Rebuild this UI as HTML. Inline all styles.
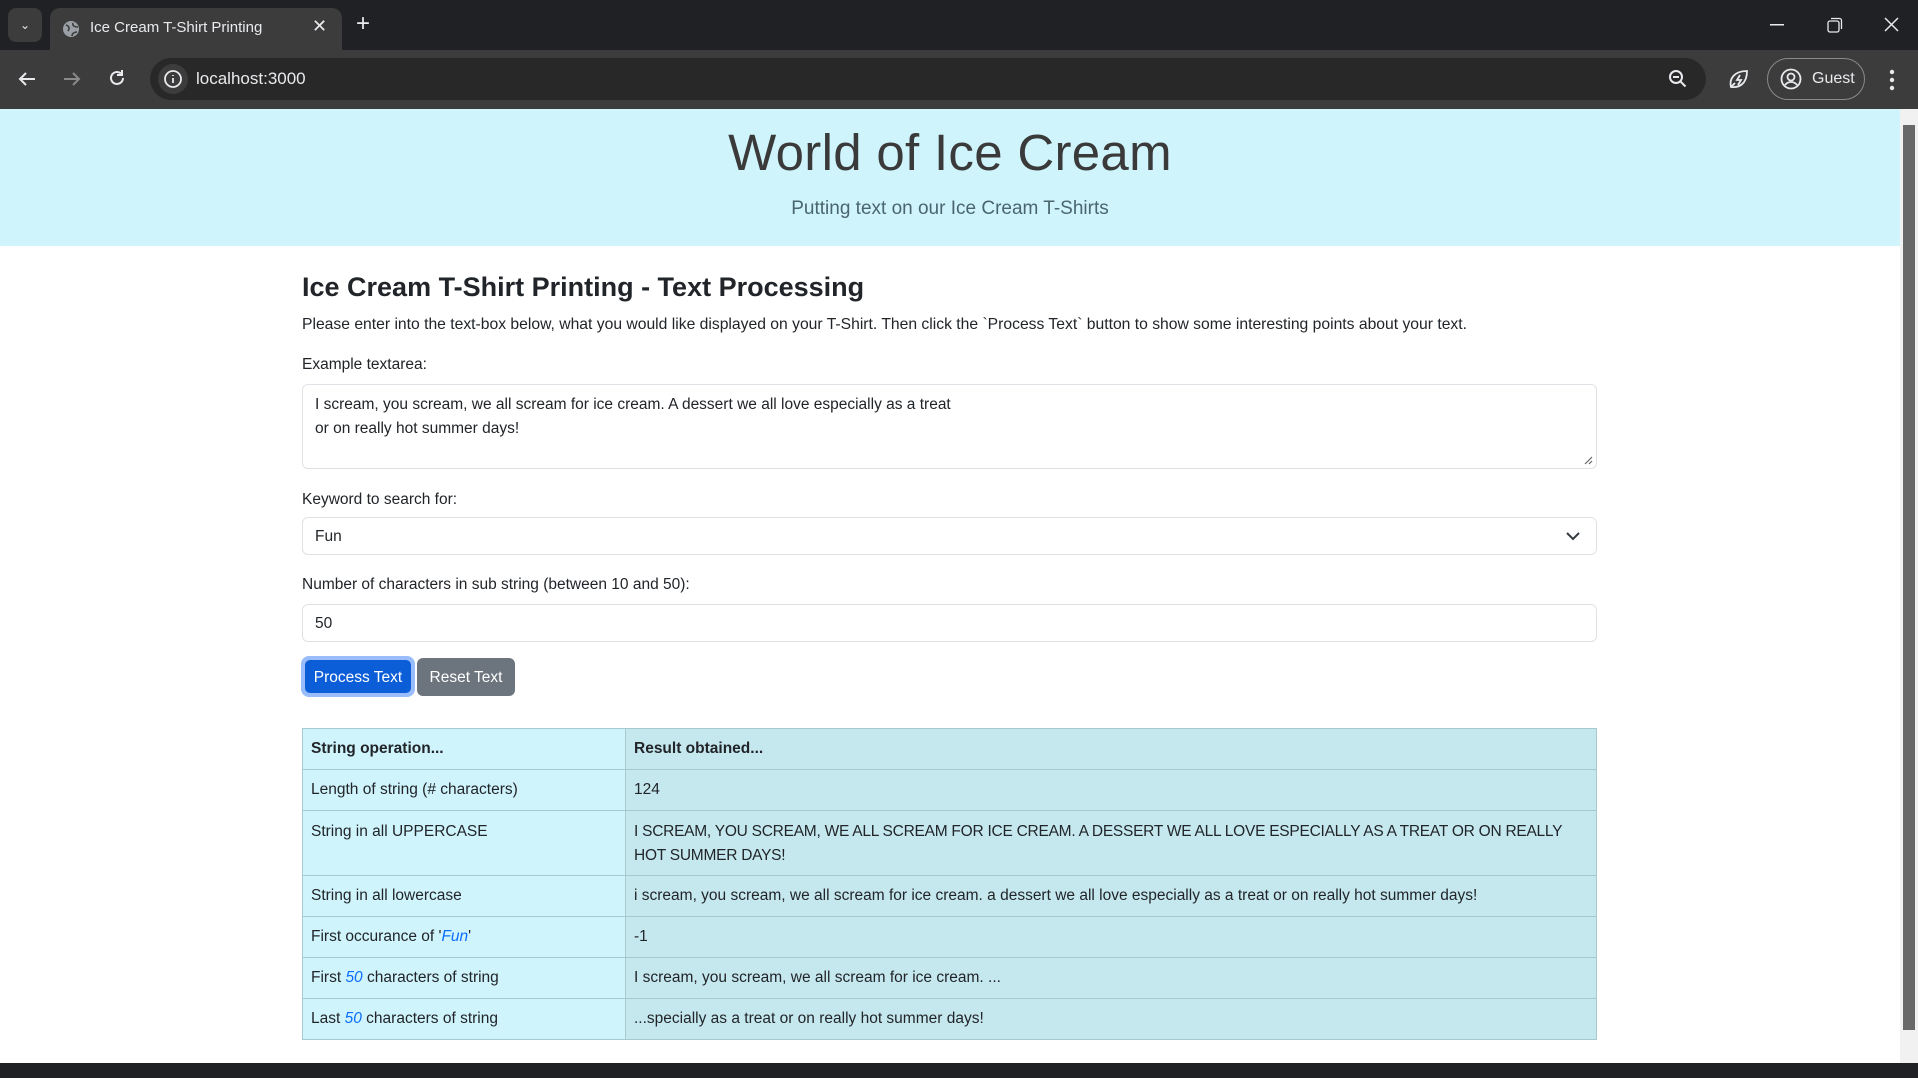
<!DOCTYPE html>
<html><head><meta charset="utf-8"><style>
*{box-sizing:border-box;margin:0;padding:0}
body{width:1918px;height:1078px;overflow:hidden;font-family:"Liberation Sans",sans-serif;background:#fff;position:relative;color:#212529}
.tabbar{position:absolute;top:0;left:0;width:1918px;height:50px;background:#202124}
.tab{position:absolute;left:50px;top:8px;width:292px;height:42px;background:#3c3c3c;border-radius:10px 10px 0 0;color:#e8eaed;font-size:15px}
.toolbar{position:absolute;top:50px;left:0;width:1918px;height:59px;background:#3c3c3c}
.omni{position:absolute;left:150px;top:8px;width:1556px;height:42px;background:#282828;border-radius:21px;color:#e8eaed;font-size:17px}
.c{color:#e8eaed;position:absolute}
.hdr{position:absolute;top:109px;left:0;width:1900px;height:137px;background:#cff4fc;text-align:center}
.hdr h1{font-weight:300;font-size:51px;color:#3a3a3a;position:absolute;top:14px;width:100%;letter-spacing:0.3px}
.hdr p{font-size:19px;color:#4a666c;position:absolute;top:89px;width:100%;font-weight:300}
.main{position:absolute;left:302px;top:0;width:1295px}
.abs{position:absolute;left:0}
label{font-size:15.5px;color:#212529}
.box{position:absolute;left:0;width:1295px;border:1px solid #dee2e6;border-radius:6px;background:#fff;font-size:15.5px;padding-left:12px}
table{position:absolute;left:0;top:728px;width:1295px;border-collapse:collapse;font-size:15.5px}
td{border:1px solid #a6c8cf;padding:0 8px;height:41px;vertical-align:middle}
td:first-child{background:#cff4fc;width:323px}
td:last-child{background:#c5e8ef}
.b{font-weight:bold}
i{color:#0d6efd}
.sb{position:absolute;right:0;top:109px;width:18px;height:969px;background:#f1f1f1}
</style></head><body>
<div class="tabbar">
 <div style="position:absolute;left:8px;top:8px;width:34px;height:34px;background:#3c3c3c;border-radius:8px;color:#e8eaed;text-align:center;line-height:34px;font-size:12px">&#8964;</div>
 <div class="tab">
  <svg style="position:absolute;left:12px;top:12px" width="18" height="18" viewBox="0 0 18 18"><circle cx="9" cy="9" r="8" fill="#9aa0a6"/><path d="M4 5c3 1 4 3 2 6M11 3c-1 3 2 4 5 4M10 16c0-3 3-4 5-4" stroke="#3c3c3c" stroke-width="1.6" fill="none"/></svg>
  <span style="position:absolute;left:40px;top:11px">Ice Cream T-Shirt Printing</span>
  <span style="position:absolute;left:262px;top:8px;font-size:18px">✕</span>
 </div>
 <span class="c" style="left:356px;top:10px;font-size:24px">+</span>
 <svg style="position:absolute;left:1770px;top:24px" width="14" height="2"><rect width="14" height="1.5" fill="#e8eaed"/></svg>
 <svg style="position:absolute;left:1827px;top:17px" width="16" height="16" fill="none" stroke="#e8eaed" stroke-width="1.3"><rect x="1" y="4" width="11" height="11" rx="2"/><path d="M4 1.5h8.5a2 2 0 0 1 2 2V12"/></svg>
 <svg style="position:absolute;left:1884px;top:17px" width="15" height="15" stroke="#e8eaed" stroke-width="1.5"><path d="M1 1l13 13M14 1L1 14"/></svg>
</div>
<div class="toolbar">
 <svg style="position:absolute;left:18px;top:21px" width="18" height="16" stroke="#e8eaed" stroke-width="2" fill="none"><path d="M17 8H2M8 2L2 8l6 6"/></svg>
 <svg style="position:absolute;left:63px;top:21px" width="18" height="16" stroke="#8a8a8a" stroke-width="2" fill="none"><path d="M1 8h15M10 2l6 6-6 6"/></svg>
 <svg style="position:absolute;left:108px;top:19px" width="18" height="18" stroke="#e8eaed" stroke-width="2" fill="none"><path d="M15 9a6 6 0 1 1-2-4.5"/><path d="M14 1v5h-5" /></svg>
 <div class="omni">
  <div style="position:absolute;left:8px;top:6px;width:30px;height:30px;border-radius:15px;background:#3c3c3c"></div>
  <svg style="position:absolute;left:13px;top:11px" width="20" height="20" stroke="#e8eaed" stroke-width="1.8" fill="none"><circle cx="10" cy="10" r="8"/><path d="M10 9v5M10 6v1"/></svg>
  <span style="position:absolute;left:46px;top:11px">localhost:3000</span>
  <svg style="position:absolute;left:1518px;top:11px" width="20" height="20" stroke="#e8eaed" stroke-width="2" fill="none"><circle cx="8" cy="8" r="6"/><path d="M5 8h6M12.5 12.5l5 5"/></svg>
 </div>
 <svg style="position:absolute;left:1728px;top:18px" width="22" height="22" stroke="#e8eaed" stroke-width="1.8" fill="none"><path d="M3 19C1 11 6 3 19 3c0 13-8 17-16 16zM3 19l4-4"/><path d="M12 7l-3 5h4l-3 5"/></svg>
 <div style="position:absolute;left:1767px;top:8px;width:98px;height:42px;border:1.5px solid #8a8a8a;border-radius:21px;color:#e8eaed;font-size:16px">
  <svg style="position:absolute;left:12px;top:9px" width="22" height="22" stroke="#e8eaed" stroke-width="1.8" fill="none"><circle cx="11" cy="11" r="9.5"/><circle cx="11" cy="9" r="3.5"/><path d="M5 17c3-4 9-4 12 0"/></svg>
  <span style="position:absolute;left:44px;top:11px">Guest</span>
 </div>
 <svg style="position:absolute;left:1889px;top:19px" width="6" height="22" fill="#e8eaed"><circle cx="3" cy="3" r="2.2"/><circle cx="3" cy="11" r="2.2"/><circle cx="3" cy="19" r="2.2"/></svg>
</div>
<div class="hdr"><h1>World of Ice Cream</h1><p>Putting text on our Ice Cream T-Shirts</p></div>
<div class="main">
 <div class="abs" style="top:272px;font-size:27px;font-weight:bold;color:#212529">Ice Cream T-Shirt Printing - Text Processing</div>
 <div class="abs" style="top:316px;font-size:15.7px;white-space:nowrap">Please enter into the text-box below, what you would like displayed on your T-Shirt. Then click the `Process Text` button to show some interesting points about your text.</div>
 <label class="abs" style="top:356px">Example textarea:</label>
 <div class="box" style="top:384px;height:85px;padding-top:8px;line-height:24px">I scream, you scream, we all scream for ice cream. A dessert we all love especially as a treat<br>or on really hot summer days!
  <svg style="position:absolute;right:3px;bottom:3px" width="10" height="10" stroke="#666" stroke-width="1.2"><path d="M9 2L2 9M9 6L6 9"/></svg></div>
 <label class="abs" style="top:491px">Keyword to search for:</label>
 <div class="box" style="top:517px;height:38px;line-height:38px">Fun
  <svg style="position:absolute;right:16px;top:14px" width="14" height="9" stroke="#343a40" stroke-width="2" fill="none"><path d="M1 1l6 6 6-6"/></svg></div>
 <label class="abs" style="top:576px">Number of characters in sub string (between 10 and 50):</label>
 <div class="box" style="top:604px;height:38px;line-height:38px">50</div>
 <div class="abs" style="top:656px;left:-1px;width:114px;height:41px;border-radius:8px;background:#98bdfa"></div>
 <div class="abs" style="top:660px;left:3px;width:106px;height:33px;border-radius:5px;background:#0b5ed7;color:#fff;font-size:15.5px;line-height:35px;text-align:center">Process Text</div>
 <div class="abs" style="top:658px;left:115px;width:98px;height:38px;border-radius:6px;background:#6c757d;color:#fff;font-size:15.5px;line-height:40px;text-align:center">Reset Text</div>
 <table>
  <tr><td class="b">String operation...</td><td class="b">Result obtained...</td></tr>
  <tr><td>Length of string (# characters)</td><td>124</td></tr>
  <tr><td style="height:65px;vertical-align:top;padding-top:12px">String in all UPPERCASE</td><td style="line-height:24px;letter-spacing:-0.25px;padding-top:2px">I SCREAM, YOU SCREAM, WE ALL SCREAM FOR ICE CREAM. A DESSERT WE ALL LOVE ESPECIALLY AS A TREAT OR ON REALLY HOT SUMMER DAYS!</td></tr>
  <tr><td>String in all lowercase</td><td>i scream, you scream, we all scream for ice cream. a dessert we all love especially as a treat or on really hot summer days!</td></tr>
  <tr><td>First occurance of '<i>Fun</i>'</td><td>-1</td></tr>
  <tr><td>First <i>50</i> characters of string</td><td>I scream, you scream, we all scream for ice cream. ...</td></tr>
  <tr><td>Last <i>50</i> characters of string</td><td>...specially as a treat or on really hot summer days!</td></tr>
 </table>
</div>
<div class="sb"><div style="position:absolute;left:3px;top:16px;width:12px;height:905px;background:#686868"></div></div>
<div style="position:absolute;left:0;top:1063px;width:1918px;height:15px;background:#202124"></div>
</body></html>
